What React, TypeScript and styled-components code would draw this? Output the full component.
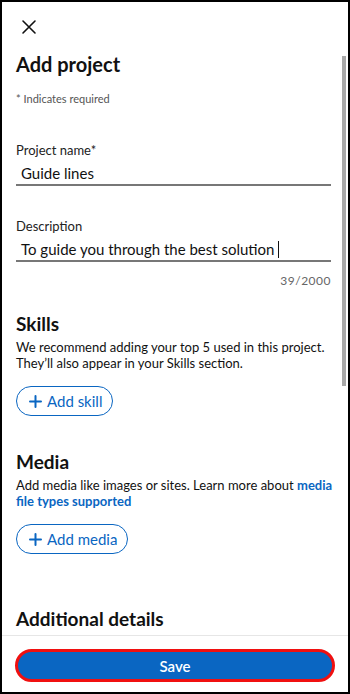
import React from "react";
import styled, { createGlobalStyle } from "styled-components";

const GlobalStyle = createGlobalStyle`
  html, body {
    margin: 0;
    padding: 0;
    background: #fff;
  }
  * {
    box-sizing: border-box;
  }
`;

const Frame = styled.div`
  position: relative;
  width: 350px;
  height: 694px;
  border: 2px solid #000;
  display: flex;
  flex-direction: column;
  font-family: Lato, "Noto Sans", sans-serif;
  color: #111;
  background: #fff;
  overflow: hidden;
`;

const Scrollbar = styled.div`
  position: absolute;
  right: 2px;
  top: 54px;
  width: 4px;
  height: 330px;
  background: #a8a8a8;
`;

const Body = styled.div`
  flex: 1;
  overflow: hidden;
  padding: 13px 13px 0 14px;
`;

const CloseButton = styled.button`
  display: flex;
  align-items: center;
  justify-content: center;
  width: 24px;
  height: 24px;
  padding: 0;
  margin-left: 1px;
  border: none;
  background: none;
`;

const Title = styled.h1`
  margin: 12px 0 0;
  font-size: 20px;
  font-weight: 700;
  line-height: 26px;
`;

const Hint = styled.div`
  margin-top: 15px;
  font-size: 11px;
  color: #555;
`;

const Field = styled.div<{ $top: number }>`
  margin-top: ${(p) => p.$top}px;
  margin-right: 4px;
`;

const Label = styled.div`
  font-size: 13px;
  line-height: 16px;
  color: #222;
`;

const Input = styled.div`
  margin-top: 5px;
  padding: 0 0 1px 5px;
  border-bottom: 2px solid #777;
  font-size: 15px;
  line-height: 20px;
  color: #111;
`;

const Caret = styled.span`
  display: inline-block;
  width: 1px;
  height: 17px;
  margin-left: 4px;
  vertical-align: -3px;
  background: #111;
`;

const Counter = styled.div`
  margin-top: 11px;
  margin-right: 4px;
  text-align: right;
  font-size: 12px;
  letter-spacing: 0.5px;
  color: #666;
`;

const SectionTitle = styled.h2<{ $top: number }>`
  margin: ${(p) => p.$top}px 0 0;
  font-size: 19px;
  font-weight: 700;
  line-height: 24px;
`;

const Text = styled.p`
  margin: 3px 0 0;
  font-size: 13px;
  line-height: 16px;
  color: #111;
`;

const Link = styled.a`
  color: #0a66c2;
  font-weight: 700;
  text-decoration: none;
`;

const OutlineButton = styled.button`
  display: flex;
  align-items: center;
  gap: 5px;
  margin-top: 15px;
  height: 30px;
  padding: 0 10px 0 12px;
  border: 1px solid #0a66c2;
  border-radius: 15px;
  background: #fff;
  color: #0a66c2;
  font-family: inherit;
  font-size: 15px;
`;

const Footer = styled.div`
  border-top: 1px solid #e6e6e6;
  padding: 13px 13px 10px;
`;

const SaveButton = styled.button`
  width: 100%;
  height: 33px;
  border: 3px solid #f01010;
  border-radius: 17px;
  background: #0a66c2;
  color: #fff;
  font-family: inherit;
  font-size: 15px;
  font-weight: 600;
`;

const PlusIcon = () => (
  <svg width="13" height="13" viewBox="0 0 13 13">
    <path d="M6.5 1v11M1 6.5h11" stroke="currentColor" strokeWidth="2" strokeLinecap="round" />
  </svg>
);

const App: React.FC = () => (
  <>
    <GlobalStyle />
    <Frame>
      <Scrollbar />
      <Body>
        <CloseButton aria-label="Close">
          <svg width="16" height="16" viewBox="0 0 16 16">
            <path d="M2 2l12 12M14 2L2 14" stroke="#111" strokeWidth="1.6" strokeLinecap="round" />
          </svg>
        </CloseButton>
        <Title>Add project</Title>
        <Hint>* Indicates required</Hint>

        <Field $top={37}>
          <Label>Project name*</Label>
          <Input>Guide lines</Input>
        </Field>

        <Field $top={32}>
          <Label>Description</Label>
          <Input>
            To guide you through the best solution
            <Caret />
          </Input>
        </Field>
        <Counter>39/2000</Counter>

        <SectionTitle $top={24}>Skills</SectionTitle>
        <Text>
          We recommend adding your top 5 used in this project. They’ll also appear in your Skills
          section.
        </Text>
        <OutlineButton>
          <PlusIcon />
          Add skill
        </OutlineButton>

        <SectionTitle $top={34}>Media</SectionTitle>
        <Text>
          Add media like images or sites. Learn more about <Link>media file types supported</Link>
        </Text>
        <OutlineButton>
          <PlusIcon />
          Add media
        </OutlineButton>

        <SectionTitle $top={53}>Additional details</SectionTitle>
      </Body>
      <Footer>
        <SaveButton>Save</SaveButton>
      </Footer>
    </Frame>
  </>
);

export default App;
